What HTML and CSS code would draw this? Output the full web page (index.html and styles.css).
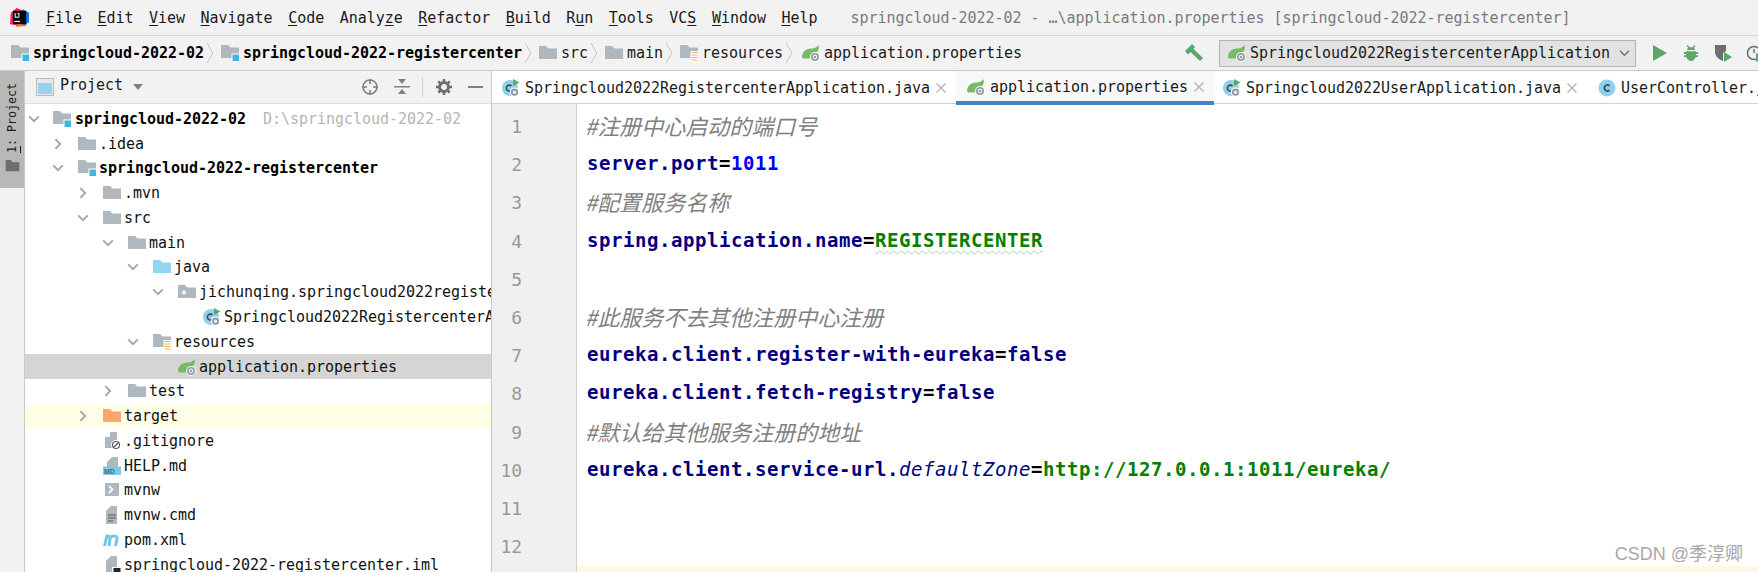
FILE: index.html
```html
<!DOCTYPE html>
<html lang="en">
<head>
<meta charset="utf-8">
<title>springcloud-2022-02</title>
<link rel="stylesheet" href="styles.css">
</head>
<body>
<svg class="defs" aria-hidden="true">
  <symbol id="folder" viewBox="0 0 18 18"><path fill="#afb8bf" d="M0 2h7l2.500 2.500H18V15H0z"/></symbol>
  <symbol id="folder-java" viewBox="0 0 18 18"><path fill="#93d4ef" d="M0 2h7l2.500 2.500H18V15H0z"/></symbol>
  <symbol id="folder-target" viewBox="0 0 18 18"><path fill="#f9a56f" d="M0 2h7l2.500 2.500H18V15H0z"/></symbol>
  <symbol id="folder-mod" viewBox="0 0 18 18"><path fill="#afb8bf" d="M0 1h7l2.500 2.500H18V14H0z"/><rect x="10.500" y="9.500" width="8" height="8" fill="#fff"/><rect x="11.500" y="10.500" width="6.500" height="6.500" fill="#40b6e0"/></symbol>
  <symbol id="folder-res" viewBox="0 0 18 18"><path fill="#afb8bf" d="M0 1h7l2.500 2.500H18V14H0z"/><rect x="10.500" y="7" width="8" height="11" fill="#fff"/><path stroke="#f0b45c" stroke-width="1.200" d="M11.500 8.500h6M11.500 11h6M11.500 13.500h6M11.500 16h6"/></symbol>
  <symbol id="pkg" viewBox="0 0 18 18"><path fill="#afb8bf" d="M0 2h7l2.500 2.500H18V15H0z"/><circle cx="6" cy="9.500" r="2" fill="#fff"/></symbol>
  <symbol id="leaf" viewBox="0 0 18 18"><path fill="#78bb64" d="M0 12C1 6 6 4.500 10 4.500c2.500 0 5-1.500 6.500-3.500 1 4-.5 6-1.500 7l-5 5.500c-3 1.500-6.500 1-8.500 1 -.8 0-1.500-1.200-1.500-2.500z"/><circle cx="13" cy="13" r="5" fill="#fff"/><circle cx="13" cy="13" r="4" fill="#8d99a1"/><circle cx="13" cy="13" r="2.400" fill="#e8eaec"/><circle cx="13" cy="13" r="1.100" fill="#7f8b91"/></symbol>
  <symbol id="cls" viewBox="0 0 18 18"><circle cx="9" cy="9" r="8.500" fill="#8fd0ec"/><path fill="none" stroke="#3c4a52" stroke-width="1.600" d="M11.500 6.800a3 3 0 1 0 0 4.400"/></symbol>
  <symbol id="cls-run" viewBox="0 0 18 18"><circle cx="8" cy="9" r="8" fill="#8fd0ec"/><path fill="none" stroke="#3c4a52" stroke-width="1.600" d="M9.500 7a3 3 0 1 0 0 4.200"/><path fill="#59a869" d="M11 0l6.500 3.500L11 7z"/><circle cx="12.500" cy="13.200" r="4.800" fill="#fff"/><circle cx="12.500" cy="13.200" r="3.600" fill="#8d99a1"/><circle cx="12.500" cy="13.200" r="1.800" fill="#e8eaec"/></symbol>
  <symbol id="chev-r" viewBox="0 0 16 16"><path fill="none" stroke="#a6a6a6" stroke-width="2.200" d="M5 2.500L10.500 8 5 13.500"/></symbol>
  <symbol id="chev-d" viewBox="0 0 16 16"><path fill="none" stroke="#a6a6a6" stroke-width="2.200" d="M2.500 5L8 10.500 13.500 5"/></symbol>
  <symbol id="crumb" viewBox="0 0 9 22"><path fill="none" stroke="#c4c4c4" stroke-width="1" d="M1 1l6 10-6 10"/></symbol>
  <symbol id="file-x" viewBox="0 0 12 12"><path stroke="#b4b4b4" stroke-width="1.300" d="M1.500 1.500l9 9M10.500 1.500l-9 9"/></symbol>
</svg>

<header class="menubar">
  <svg class="logo" viewBox="0 0 22 22" aria-hidden="true">
    <path fill="#fc801d" d="M1 9l7-8 13 5-3 14-10 1z"/>
    <path fill="#fe2857" d="M2 6l6-5 6 3-6 15-7-1z"/>
    <path fill="#087cfa" d="M14 2l7 4v10l-6 4z"/>
    <rect x="4" y="4" width="14" height="14" fill="#000"/>
    <text class="logo-text" x="5.500" y="11">IJ</text>
    <rect x="5.500" y="14.500" width="6" height="1.300" fill="#fff"/>
  </svg>
  <nav class="menu">
    <span><u>F</u>ile</span><span><u>E</u>dit</span><span><u>V</u>iew</span><span><u>N</u>avigate</span><span><u>C</u>ode</span><span>Analy<u>z</u>e</span><span><u>R</u>efactor</span><span><u>B</u>uild</span><span>R<u>u</u>n</span><span><u>T</u>ools</span><span>VC<u>S</u></span><span><u>W</u>indow</span><span><u>H</u>elp</span>
  </nav>
  <div class="title">springcloud-2022-02 - …\application.properties [springcloud-2022-registercenter]</div>
</header>

<div class="navbar">
  <div class="crumbs">
    <svg class="ico"><use href="#folder-mod"/></svg><b>springcloud-2022-02</b><svg class="sep"><use href="#crumb"/></svg>
    <svg class="ico"><use href="#folder-mod"/></svg><b>springcloud-2022-registercenter</b><svg class="sep"><use href="#crumb"/></svg>
    <svg class="ico"><use href="#folder"/></svg><span>src</span><svg class="sep"><use href="#crumb"/></svg>
    <svg class="ico"><use href="#folder"/></svg><span>main</span><svg class="sep"><use href="#crumb"/></svg>
    <svg class="ico"><use href="#folder-res"/></svg><span>resources</span><svg class="sep last"><use href="#crumb"/></svg>
    <svg class="ico"><use href="#leaf"/></svg><span>application.properties</span>
  </div>
  <div class="actions">
    <svg class="hammer" viewBox="0 0 20 20" aria-hidden="true"><path fill="#59a869" d="M1 8l7-7 3 3-1.500 2L19 15l-3 3-9.500-9L4 11.500z"/></svg>
    <div class="runconfig">
      <svg class="ico"><use href="#leaf"/></svg><span class="runname">Springcloud2022RegistercenterApplication</span>
      <svg class="combo-arrow" viewBox="0 0 12 8" aria-hidden="true"><path fill="none" stroke="#6e6e6e" stroke-width="1.300" d="M1 1.500l5 5 5-5"/></svg>
    </div>
    <svg class="tool run" viewBox="0 0 14 18" aria-hidden="true"><path fill="#59a869" d="M0 1l14 8-14 8z"/></svg>
    <svg class="tool bug" viewBox="0 0 18 18" aria-hidden="true"><path fill="#59a869" d="M6 3l-2-2 1-1 2.500 2.500h3L13 0l1 1-2 2c1 .8 1.500 1.500 1.700 2.500H4.300C4.500 4.500 5 3.800 6 3zM3.500 7h11v1H17v2h-2.500v1.500H17v2h-2.700c-.8 2.500-3 4.500-5.300 4.500s-4.500-2-5.300-4.500H1v-2h2.500V10H1V8h2.500z"/></svg>
    <svg class="tool cover" viewBox="0 0 18 18" aria-hidden="true"><path fill="#6e6e6e" d="M1 1h11v6l-3 2v8C4 15 1 12 1 8z"/><path fill="#59a869" d="M10 8l8 5-8 5z"/></svg>
    <svg class="tool prof" viewBox="0 0 18 18" aria-hidden="true"><circle cx="8" cy="9" r="6.500" fill="none" stroke="#6e6e6e" stroke-width="1.500"/><path fill="none" stroke="#6e6e6e" stroke-width="1.500" d="M8 5v4"/><path fill="#59a869" d="M10 9l8 5-8 4z"/></svg>
  </div>
</div>

<div class="workspace">
  <aside class="stripe">
    <div class="stripe-btn">
      <span class="stripe-label"><u>1</u>: Project</span>
      <svg class="stripe-ico" viewBox="0 0 16 14" aria-hidden="true"><path fill="#6e6e6e" d="M0 0h6l2 2.500h8V13H0z"/></svg>
    </div>
  </aside>

  <section class="project">
    <div class="project-head">
      <svg class="win-ico" viewBox="0 0 18 18" aria-hidden="true"><rect width="18" height="18" fill="#b4bcc2"/><rect x="1" y="1" width="16" height="16" fill="#e6e8ea"/><rect x="2" y="5" width="14" height="11" fill="#93d4ef"/></svg>
      <span class="head-title">Project</span>
      <svg class="caret" viewBox="0 0 10 6" aria-hidden="true"><path fill="#7f7f7f" d="M0 0h10L5 6z"/></svg>
      <svg class="hd-ico locate" viewBox="0 0 18 18" aria-hidden="true"><circle cx="9" cy="9" r="7" fill="none" stroke="#7f7f7f" stroke-width="1.600"/><path stroke="#7f7f7f" stroke-width="1.600" d="M9 1v5M9 12v5M1 9h5M12 9h5"/></svg>
      <svg class="hd-ico collapse" viewBox="0 0 16 18" aria-hidden="true"><path fill="#7f7f7f" d="M0 8h16v1.500H0zM4 1h8L8 6zM8 11l4 5H4z"/></svg>
      <span class="hd-sep"></span>
      <svg class="hd-ico gear" viewBox="0 0 16 16" aria-hidden="true"><circle cx="8" cy="8" r="4.500" fill="none" stroke="#6e6e6e" stroke-width="3"/><path stroke="#6e6e6e" stroke-width="2.600" d="M8 0v3M8 13v3M0 8h3M13 8h3M2.300 2.300l2 2M11.700 11.700l2 2M13.700 2.300l-2 2M4.300 11.700l-2 2"/></svg>
      <span class="minus"></span>
    </div>
    <div class="tree">
      <div class="row d0"><svg class="chev"><use href="#chev-d"/></svg><svg class="ico"><use href="#folder-mod"/></svg><b>springcloud-2022-02</b><span class="hint">D:\springcloud-2022-02</span></div>
      <div class="row d1"><svg class="chev"><use href="#chev-r"/></svg><svg class="ico"><use href="#folder"/></svg><span>.idea</span></div>
      <div class="row d1"><svg class="chev"><use href="#chev-d"/></svg><svg class="ico"><use href="#folder-mod"/></svg><b>springcloud-2022-registercenter</b></div>
      <div class="row d2"><svg class="chev"><use href="#chev-r"/></svg><svg class="ico"><use href="#folder"/></svg><span>.mvn</span></div>
      <div class="row d2"><svg class="chev"><use href="#chev-d"/></svg><svg class="ico"><use href="#folder"/></svg><span>src</span></div>
      <div class="row d3"><svg class="chev"><use href="#chev-d"/></svg><svg class="ico"><use href="#folder"/></svg><span>main</span></div>
      <div class="row d4"><svg class="chev"><use href="#chev-d"/></svg><svg class="ico"><use href="#folder-java"/></svg><span>java</span></div>
      <div class="row d5"><svg class="chev"><use href="#chev-d"/></svg><svg class="ico"><use href="#pkg"/></svg><span>jichunqing.springcloud2022registercenter</span></div>
      <div class="row d6"><span class="chev"></span><svg class="ico"><use href="#cls-run"/></svg><span>Springcloud2022RegistercenterApplication</span></div>
      <div class="row d4"><svg class="chev"><use href="#chev-d"/></svg><svg class="ico"><use href="#folder-res"/></svg><span>resources</span></div>
      <div class="row d5 selected"><span class="chev"></span><svg class="ico"><use href="#leaf"/></svg><span>application.properties</span></div>
      <div class="row d3"><svg class="chev"><use href="#chev-r"/></svg><svg class="ico"><use href="#folder"/></svg><span>test</span></div>
      <div class="row d2 excluded"><svg class="chev"><use href="#chev-r"/></svg><svg class="ico"><use href="#folder-target"/></svg><span>target</span></div>
      <div class="row d2"><span class="chev"></span>
        <svg class="ico" viewBox="0 0 18 18"><path fill="#afb8bf" d="M2 5l5-5h7v16H2z"/><path fill="#fff" d="M7 0v5H2l-1 1v-2z"/><circle cx="13" cy="13" r="5" fill="#fff"/><circle cx="13" cy="13" r="3.500" fill="none" stroke="#5a5a5a" stroke-width="1.200"/><path stroke="#5a5a5a" stroke-width="1.200" d="M10.500 15.500l5-5"/></svg><span>.gitignore</span></div>
      <div class="row d2"><span class="chev"></span>
        <svg class="ico" viewBox="0 0 18 18"><path fill="#afb8bf" d="M4 5l5-5h6v10H4z"/><rect x="0" y="9.500" width="18" height="8.500" fill="#7fc9e8"/><text class="md" x="1" y="16.500">MD</text></svg><span>HELP.md</span></div>
      <div class="row d2"><span class="chev"></span>
        <svg class="ico" viewBox="0 0 18 18"><rect x="2" y="2" width="14" height="13" fill="#afb8bf"/><path fill="none" stroke="#fff" stroke-width="1.800" d="M6 5l3.500 3.500L6 12"/></svg><span>mvnw</span></div>
      <div class="row d2"><span class="chev"></span>
        <svg class="ico" viewBox="0 0 18 18"><path fill="#afb8bf" d="M3 5l5-5h6v18H3z"/><path stroke="#555" stroke-width="1.200" d="M5 9h8M5 12h8M5 15h5"/></svg><span>mvnw.cmd</span></div>
      <div class="row d2"><span class="chev"></span>
        <svg class="ico" viewBox="0 0 18 18"><path fill="none" stroke="#75c7ea" stroke-width="3" d="M1.500 15L4 5c2 0 3.500 1 3 3L6 15M7 8c.5-2 2-3 4-3s3.500 1 3 3l-1.500 7"/></svg><span>pom.xml</span></div>
      <div class="row d2"><span class="chev"></span>
        <svg class="ico" viewBox="0 0 18 18"><path fill="#afb8bf" d="M3 5l5-5h6v18H3z"/><rect x="9" y="11" width="9" height="7" fill="#fff"/><rect x="10.500" y="12" width="7" height="6" fill="#222"/></svg><span>springcloud-2022-registercenter.iml</span></div>
    </div>
  </section>

  <main class="editor">
    <div class="tabs">
      <div class="tab t1"><svg class="ico"><use href="#cls-run"/></svg><span>Springcloud2022RegistercenterApplication.java</span><svg class="x"><use href="#file-x"/></svg></div>
      <div class="tab t2 active"><svg class="ico"><use href="#leaf"/></svg><span>application.properties</span><svg class="x"><use href="#file-x"/></svg></div>
      <div class="tab t3"><svg class="ico"><use href="#cls-run"/></svg><span>Springcloud2022UserApplication.java</span><svg class="x"><use href="#file-x"/></svg></div>
      <div class="tab t4"><svg class="ico"><use href="#cls"/></svg><span>UserController.java</span></div>
    </div>
    <div class="code">
      <div class="line lead"><span class="num"></span></div>
      <div class="line"><span class="num">1</span><span class="src"><i class="cm">#注册中心启动的端口号</i></span></div>
      <div class="line"><span class="num">2</span><span class="src"><span class="k">server.port</span>=<span class="n">1011</span></span></div>
      <div class="line"><span class="num">3</span><span class="src"><i class="cm">#配置服务名称</i></span></div>
      <div class="line"><span class="num">4</span><span class="src"><span class="k">spring.application.name</span>=<span class="v wavy">REGISTERCENTER</span></span></div>
      <div class="line"><span class="num">5</span><span class="src"></span></div>
      <div class="line"><span class="num">6</span><span class="src"><i class="cm">#此服务不去其他注册中心注册</i></span></div>
      <div class="line"><span class="num">7</span><span class="src"><span class="k">eureka.client.register-with-eureka</span>=<span class="k">false</span></span></div>
      <div class="line"><span class="num">8</span><span class="src"><span class="k">eureka.client.fetch-registry</span>=<span class="k">false</span></span></div>
      <div class="line"><span class="num">9</span><span class="src"><i class="cm">#默认给其他服务注册的地址</i></span></div>
      <div class="line"><span class="num">10</span><span class="src"><span class="k">eureka.client.service-url.<i class="it">defaultZone</i></span>=<span class="v">http://127.0.0.1:1011/eureka/</span></span></div>
      <div class="line"><span class="num">11</span><span class="src"></span></div>
      <div class="line"><span class="num">12</span><span class="src"></span></div>
      <div class="line"><span class="num"></span><span class="src current"></span></div>
    </div>
    <div class="watermark">CSDN @季淳卿</div>
  </main>
</div>
</body>
</html>
```
FILE: styles.css
```css
* { box-sizing: border-box; }
html, body { height: 100%; }
body {
  margin: 0;
  width: 1758px;
  height: 572px;
  overflow: hidden;
  display: flex;
  flex-direction: column;
  background: #f2f2f2;
  color: #1a1a1a;
  font: 15px/20px "DejaVu Sans Mono", "Liberation Mono", monospace;
  letter-spacing: -0.030px;
}
svg { flex: none; }
.defs { width: 0; height: 0; position: absolute; }
u { text-underline-offset: 2px; }
b { font-weight: 700; color: #000; white-space: nowrap; }

.menubar {
  height: 36px;
  flex: none;
  display: flex;
  align-items: center;
  padding-left: 9px;
  border-bottom: 1px solid #d2d2d2;
  white-space: nowrap;
}
.logo { width: 21px; height: 21px; margin-right: 16px; }
.logo-text { font: 700 7px "Liberation Sans", sans-serif; fill: #fff; }
.menu { display: flex; gap: 15.500px; }
.title { margin-left: 33px; color: #7a7a7a; }

.navbar {
  height: 35px;
  flex: none;
  display: flex;
  align-items: center;
  border-bottom: 1px solid #c9c9c9;
  white-space: nowrap;
}
.crumbs { flex: 1; min-width: 0; display: flex; align-items: center; padding-left: 11px; }
.ico { width: 18px; height: 18px; margin-right: 5px; }
.crumbs .ico { margin-right: 4px; }
.sep { width: 9px; height: 22px; margin: 0 6px 0 2px; }
.sep.last { margin-right: 8px; }
.actions { width: 580px; flex: none; display: flex; align-items: center; overflow: hidden; padding-left: 6px; }
.hammer { width: 20px; height: 20px; margin-right: 15px; }
.runconfig {
  width: 417px;
  height: 27px;
  flex: none;
  display: flex;
  align-items: center;
  padding-left: 8px;
  background: #e2e2e2;
  border: 1px solid #b4b4b4;
}
.runname { margin-left: -1px; }
.combo-arrow { width: 11px; height: 8px; margin-left: 9px; }
.tool { width: 18px; height: 18px; flex: none; }
.run { width: 14px; margin-left: 17px; }
.bug { width: 16px; margin-left: 16px; }
.cover { margin-left: 15px; }
.prof { margin-left: 14px; }

.workspace { flex: 1; display: flex; min-height: 0; }
.stripe { width: 25px; flex: none; border-right: 1px solid #c9c9c9; }
.stripe-btn {
  width: 24px;
  height: 117px;
  background: #b8b8b8;
  display: flex;
  flex-direction: column;
  align-items: center;
  padding-top: 12px;
  gap: 7px;
}
.stripe-label {
  writing-mode: vertical-rl;
  transform: rotate(180deg);
  font-size: 11.700px;
  line-height: 16px;
  white-space: nowrap;
}
.stripe-ico { width: 15px; height: 12px; }

.project { width: 467px; flex: none; background: #fff; overflow: hidden; border-right: 1px solid #c9c9c9; }
.project-head {
  height: 33px;
  display: flex;
  align-items: center;
  background: #f2f2f2;
  border-bottom: 1px solid #dcdcdc;
  padding-left: 11px;
}
.win-ico { width: 18px; height: 18px; margin-right: 6px; }
.head-title { margin-top: -4px; }
.caret { width: 10px; height: 6px; margin-left: 10px; }
.hd-ico { width: 18px; height: 18px; }
.locate { margin-left: 218px; }
.collapse { margin-left: 15px; width: 16px; }
.hd-sep { width: 1px; height: 20px; background: #d2d2d2; margin: 0 12px; }
.gear { width: 16px; height: 16px; margin-left: 1px; }
.minus { width: 15px; height: 2px; background: #7f7f7f; margin-left: 16px; }

.tree { padding-top: 2.500px; }
.row {
  height: 24.780px;
  display: flex;
  align-items: center;
  white-space: nowrap;
  color: #111;
}
.chev { width: 14px; height: 14px; flex: none; margin-right: 13px; }
.row .ico { margin-right: 3px; }
.d0 { padding-left: 2px; }
.d0 .chev { margin-right: 12px; }
.d0 .ico { margin-right: 4px; }
.d1 { padding-left: 26px; }
.d2 { padding-left: 51px; }
.d3 { padding-left: 76px; }
.d4 { padding-left: 101px; }
.d5 { padding-left: 126px; }
.d6 { padding-left: 151px; }
.hint { color: #b5b5b5; margin-left: 17px; }
.selected { background: #d5d5d5; }
.excluded { background: #fefee6; }
.md { font: 700 7px "Liberation Sans", sans-serif; fill: #3a6f8a; }

.editor { flex: 1; min-width: 0; position: relative; background: #fff; overflow: hidden; display: flex; flex-direction: column; }
.tabs {
  height: 33px;
  flex: none;
  display: flex;
  align-items: center;
  border-bottom: 1px solid #d2d2d2;
  white-space: nowrap;
}
.tab { height: 32px; display: flex; align-items: center; flex: none; padding-top: 2px; }
.tab .ico { margin-right: 5px; }
.t1 { width: 464px; padding-left: 10px; }
.t2 { width: 258px; padding-left: 11px; }
.t3 { width: 375px; padding-left: 9px; }
.t4 { padding-left: 9px; }
.active { background: #f8f8f8; border-bottom: 4px solid #4083c9; height: 34px; margin-bottom: -2px; }
.x { width: 12px; height: 12px; margin-left: 5px; }

.code { flex: 1; min-height: 0; }
.line { height: 38.200px; display: flex; }
.lead { height: 4px; }
.num {
  width: 85px;
  flex: none;
  background: #f0f0f0;
  border-right: 1px solid #d2d2d2;
  color: #999;
  font-size: 18px;
  line-height: 38px;
  text-align: right;
  padding-right: 54px;
}
.src {
  flex: 1;
  padding-left: 10px;
  font-size: 19px;
  line-height: 35px;
  letter-spacing: 0.560px;
  font-weight: 700;
  color: #000;
  white-space: nowrap;
}
.current { background: #fdf8e2; }
.k { color: #000080; }
.n { color: #0000ff; }
.v { color: #008000; }
.wavy { text-decoration: underline wavy #a9d3a9 1px; text-underline-offset: 3px; }
.it { font-style: italic; font-weight: 400; }
.cm {
  font-family: "Noto Sans CJK SC", sans-serif;
  font-size: 22px;
  font-weight: 400;
  letter-spacing: 0;
  color: #808080;
  font-style: italic;
  vertical-align: 1px;
  margin-left: -2px;
}
.watermark {
  position: absolute;
  right: 15px;
  bottom: 8px;
  font: 18px/20px "Liberation Sans", "Noto Sans CJK SC", sans-serif;
  letter-spacing: 0;
  color: #a8a8a8;
}
```
